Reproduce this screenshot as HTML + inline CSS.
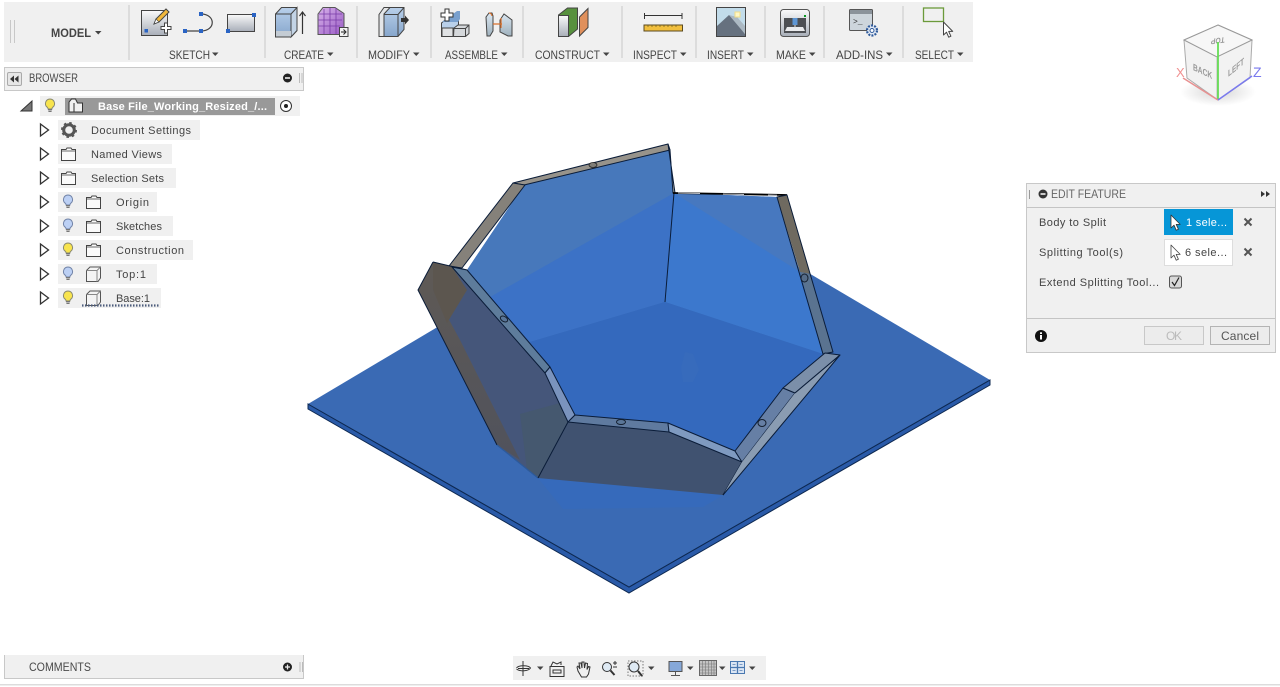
<!DOCTYPE html>
<html><head><meta charset="utf-8"><title>Edit Feature</title>
<style>
html,body{margin:0;padding:0;background:#fff;width:1280px;height:687px;overflow:hidden}
svg{display:block}
text{font-family:"Liberation Sans",sans-serif;font-size:11px;fill:#444}
.t{fill:#4a4a4a}
.e{stroke:#0a1c38;stroke-width:1;stroke-linejoin:round}
</style></head><body>
<svg width="1280" height="687" viewBox="0 0 1280 687" xmlns="http://www.w3.org/2000/svg">
<defs>
<linearGradient id="gw" x1="0" y1="0" x2="0" y2="1"><stop offset="0" stop-color="#fafafa"/><stop offset="1" stop-color="#a8aeb8"/></linearGradient>
<linearGradient id="gb" x1="0" y1="0" x2="0" y2="1"><stop offset="0" stop-color="#b9d0ea"/><stop offset="1" stop-color="#86a6cc"/></linearGradient>
<linearGradient id="gp" x1="0" y1="0" x2="1" y2="1"><stop offset="0" stop-color="#d7b2ea"/><stop offset="1" stop-color="#9a5cc4"/></linearGradient>
<linearGradient id="gs" x1="0" y1="0" x2="0" y2="1"><stop offset="0" stop-color="#dce8f2"/><stop offset="1" stop-color="#9fb1bd"/></linearGradient>
<linearGradient id="lb" x1="0" y1="0" x2="0" y2="1"><stop offset="0" stop-color="#5f5a55"/><stop offset="1" stop-color="#50525c"/></linearGradient>
<radialGradient id="sh" cx=".5" cy=".5" r=".5"><stop offset="0" stop-color="#000" stop-opacity=".16"/><stop offset="1" stop-color="#000" stop-opacity="0"/></radialGradient>
<g id="by"><path d="M0-6a4.600 4.600 0 0 1 2.800 8.200c-.7.6-.9 1.200-.9 1.800h-3.800c0-.6-.2-1.200-.9-1.800A4.600 4.600 0 0 1 0-6z" fill="#f8e44e" stroke="#8a8a70"/><path d="M-2 4.600h4M-1.600 6.400h3.200" stroke="#777" stroke-width="1.300"/></g>
<g id="bb"><path d="M0-6a4.600 4.600 0 0 1 2.800 8.200c-.7.6-.9 1.200-.9 1.800h-3.800c0-.6-.2-1.200-.9-1.800A4.600 4.600 0 0 1 0-6z" fill="#bcd0f4" stroke="#7284a8"/><path d="M-2 4.600h4M-1.600 6.400h3.200" stroke="#777" stroke-width="1.300"/></g>
<g id="fo"><path d="M.5 2.500h4.500l1-1.500h4l1 1.500h3.500v11H.5z" fill="#fafafa" stroke="#444"/><path d="M.5 4h14.500" stroke="#444" stroke-width=".8"/></g>
<g id="cu"><path d="M.5 4.500L4 1h10.500v11L12 15.500H.5z" fill="#f4f4f4" stroke="#555"/><path d="M.5 4.500H11V15.500M11 4.500L14.500 1" fill="none" stroke="#888"/></g>
<path id="ex" d="M40.500 0l8 6-8 6z" fill="#fff" stroke="#333" stroke-width="1.300"/>
<path id="ca" d="M0 0h6.500l-3.250 3.500z" fill="#444"/>
<path id="cur" d="M0 0v13l3-2.800 2.200 5 2.200-1-2.200-4.800h4z" stroke-linejoin="round"/>
</defs>

<!-- toolbar -->
<rect x="4" y="2" width="969" height="60" fill="#f0f0f0"/>
<path d="M10.500 20v23M14.500 20v23" stroke="#c8c8c8"/>
<g stroke="#dcdcdc" stroke-width="2"><path d="M129 5v55M265 6v52M357 6v52M431 6v52M523 6v52M622 6v52M696 6v52M765 6v52M824 6v52M903 6v52"/></g>
<text x="51" y="37" textLength="40" lengthAdjust="spacingAndGlyphs" style="font-size:11.500px;font-weight:bold">MODEL</text>
<use href="#ca" x="95" y="31"/>
<g class="t">
<text x="169" y="59" textLength="41" lengthAdjust="spacingAndGlyphs" style="font-size:12px">SKETCH</text><use href="#ca" x="212" y="52.500"/>
<text x="284" y="59" textLength="40" lengthAdjust="spacingAndGlyphs" style="font-size:12px">CREATE</text><use href="#ca" x="327" y="52.500"/>
<text x="368" y="59" textLength="42" lengthAdjust="spacingAndGlyphs" style="font-size:12px">MODIFY</text><use href="#ca" x="413" y="52.500"/>
<text x="445" y="59" textLength="53" lengthAdjust="spacingAndGlyphs" style="font-size:12px">ASSEMBLE</text><use href="#ca" x="501" y="52.500"/>
<text x="535" y="59" textLength="65" lengthAdjust="spacingAndGlyphs" style="font-size:12px">CONSTRUCT</text><use href="#ca" x="603" y="52.500"/>
<text x="633" y="59" textLength="44" lengthAdjust="spacingAndGlyphs" style="font-size:12px">INSPECT</text><use href="#ca" x="680" y="52.500"/>
<text x="707" y="59" textLength="37" lengthAdjust="spacingAndGlyphs" style="font-size:12px">INSERT</text><use href="#ca" x="747" y="52.500"/>
<text x="776" y="59" textLength="30" lengthAdjust="spacingAndGlyphs" style="font-size:12px">MAKE</text><use href="#ca" x="809" y="52.500"/>
<text x="836" y="59" textLength="47" lengthAdjust="spacingAndGlyphs" style="font-size:12px">ADD-INS</text><use href="#ca" x="886" y="52.500"/>
<text x="915" y="59" textLength="39" lengthAdjust="spacingAndGlyphs" style="font-size:12px">SELECT</text><use href="#ca" x="957" y="52.500"/>
</g>

<!-- sketch icons -->
<rect x="141.500" y="10.500" width="26" height="25" fill="url(#gw)" stroke="#444"/>
<path d="M154 24l2-5 10-10 3 3-10 10z" fill="#f1b83c" stroke="#444"/><path d="M154 24l2-5 3 3z" fill="#fff" stroke="#444" stroke-width=".7"/>
<rect x="144.500" y="29" width="3.500" height="3.500" fill="#2a64c4"/>
<path d="M161 26.500h3.500V23h3v3.500h3.500v3h-3.500V33h-3v-3.500H161z" fill="#fff" stroke="#444"/>
<path d="M185 31h16M201 14c15 0 15 17 0 17" fill="none" stroke="#444" stroke-width="1.200"/>
<g fill="#2a64c4"><rect x="183" y="29" width="4" height="4"/><rect x="199" y="12" width="4" height="4"/><rect x="199" y="29" width="4" height="4"/></g>
<rect x="227.500" y="14.500" width="27" height="17" fill="url(#gw)" stroke="#444"/>
<rect x="252" y="13" width="4" height="4" fill="#2a64c4"/><rect x="226" y="29" width="4" height="4" fill="#2a64c4"/>

<!-- create icons -->
<path d="M275.500 14l6-6.500h15.500v23l-6 6.500h-15.500z" fill="url(#gb)" stroke="#444"/>
<path d="M291 14l6-6.500v23l-6 6.500z" fill="#c3d4e6" stroke="#444"/><path d="M275.500 14H291" stroke="#444"/><rect x="276" y="31" width="15" height="5.500" fill="#c4ccd4"/>
<path d="M302.500 34V13M299.500 16l3-4 3 4" fill="none" stroke="#333" stroke-width="1.200"/>
<path d="M318 14l5-6.500h12l9 6v16l-5 5h-21z" fill="url(#gp)" stroke="#555"/>
<path d="M318 20h24M318 26h22M324 9v25M330 8v26M336 8v26M319 14h23" fill="none" stroke="#7a3ca8" stroke-width=".8"/>
<rect x="339.500" y="27.500" width="8.500" height="9" fill="#f2f2f2" stroke="#444"/><path d="M341 32h4M343.500 29.500l2.500 2.500-2.500 2.500" fill="none" stroke="#222"/>

<!-- modify -->
<path d="M379 14.500l5-7h6v29h-11z" fill="#e4e6e8" stroke="#444"/>
<path d="M384 36.500V14l6-6.500h14v22l-6 7z" fill="url(#gb)" stroke="#444"/><path d="M384 14.500h14v22M398 14.500l6-7" fill="none" stroke="#444"/>
<path d="M401 18h4v-2.500l4 4.500-4 4.500V22h-4z" fill="#333"/>

<!-- assemble -->
<path d="M441.500 23l3-2.500h14V36.500h-17z" fill="#b9d0ea" stroke="#444"/>
<path d="M442 22h16l2-3v-8h-3" fill="#79a0ce" stroke="none"/>
<rect x="442" y="28" width="11" height="8.500" fill="#e0e2e4" stroke="#444"/>
<path d="M454 28l4-3h11v8.500l-3.500 3h-12z" fill="#d5d8db" stroke="#444"/><path d="M454 28.500h11.500v8M465.500 28.500l3.500-3.500" fill="none" stroke="#444"/>
<path d="M445 9h4v4h4v4h-4v4h-4v-4h-4v-4h4z" fill="#fff" stroke="#333"/>
<path d="M486 17l3-4h3l1 3v15l-3 5h-3zM500 20l4-6 8 6v16l-4 0-8-4z" fill="url(#gs)" stroke="#444"/><path d="M489 13a3 3 0 0 1 3 3M493 24h9M501 18v10" fill="none" stroke="#d8702c" stroke-width="1.200"/>

<!-- construct -->
<path d="M558.500 15l9-7h10v21l-9 7.500h-10z" fill="#57913e" stroke="#444"/><path d="M558.500 15.500h10v21h-10z" fill="url(#gw)" stroke="#444"/>
<path d="M579.500 17l8.500-8.500v19L579.500 36z" fill="#e0905c" stroke="#444"/>

<!-- inspect -->
<path d="M644 15.500h38M644.500 13v6M682 13v6" stroke="#333" fill="none"/>
<rect x="644" y="25" width="38.500" height="6" fill="#f1bf3e" stroke="#5a4a20"/><path d="M648 25v2M652 25v2M656 25v2M660 25v2M664 25v2M668 25v2M672 25v2M676 25v2" stroke="#6a5a20" stroke-width=".7"/>

<!-- insert -->
<rect x="716.500" y="7.500" width="29" height="29" fill="#c2dcea" stroke="#444"/>
<path d="M717 36V26l12-11 7 7 9 12v2z" fill="#66717f"/><path d="M729 15l8 2 8 9v8z" fill="#acb9c3"/>
<rect x="735" y="12" width="5" height="5" fill="#fff7c4" stroke="#f1dd88"/>

<!-- make -->
<rect x="780.500" y="9.500" width="29" height="27" rx="3" fill="url(#gw)" stroke="#555"/>
<rect x="784" y="18" width="22" height="15" fill="#4d4f53"/><path d="M787 27h16l2 4h-20z" fill="#e9eaec"/><rect x="792.500" y="18" width="5" height="7" fill="#5d95d3"/><path d="M795 25v3" stroke="#ddd"/><rect x="804" y="15" width="2" height="2" fill="#0a9a22"/>

<!-- add-ins -->
<rect x="849.500" y="9.500" width="23" height="21" rx="1" fill="#cdd5dc" stroke="#555"/><rect x="850" y="10" width="22" height="4" fill="#8b939b"/>
<text x="853" y="24" style="font-size:8px;fill:#333;font-family:'Liberation Mono',monospace">&gt;_</text>
<circle cx="872" cy="30.500" r="5" fill="#e3eaf4" stroke="#2e5a9c" stroke-width="2.200" stroke-dasharray="2 1.200"/><circle cx="872" cy="30.500" r="2" fill="#fff" stroke="#2e5a9c"/>

<!-- select -->
<rect x="923.500" y="8" width="20" height="13.500" fill="none" stroke="#6b9a3a" stroke-width="1.300"/>
<use href="#cur" x="943.500" y="22" fill="#fff" stroke="#444"/>

<!-- browser -->
<rect x="4.500" y="67.500" width="299" height="23" fill="#f0f0f0" stroke="#c8c8c8"/>
<rect x="7.500" y="72.500" width="14" height="13" rx="1.500" fill="#e6e6e6" stroke="#aaa"/>
<path d="M14 75.500v7l-4-3.500zM18.500 75.500v7l-4-3.500z" fill="#333"/>
<text x="29" y="82" textLength="49" lengthAdjust="spacingAndGlyphs" class="t" style="font-size:11.500px">BROWSER</text>
<circle cx="287.500" cy="78" r="4.500" fill="#222"/><rect x="285" y="77.200" width="5" height="1.600" fill="#eee"/>
<path d="M299.500 73v10M302 73v10" stroke="#bbb"/>

<rect x="40" y="96" width="260" height="20" fill="#f0f0f0"/>
<rect x="65" y="98" width="210" height="17" fill="#999"/>
<path d="M21 111l11-10v10z" fill="#777" stroke="#333"/>
<use href="#by" x="50" y="105"/>
<path d="M69 112v-10l2.500-3h4l2 4h5v9z" fill="#f2f2f2" stroke="#333"/><path d="M74 112v-9" stroke="#333"/>
<text x="98" y="110" textLength="169" style="font-weight:bold;fill:#fff">Base File_Working_Resized_/...</text>
<circle cx="286" cy="106" r="5.500" fill="#fff" stroke="#333"/><circle cx="286" cy="106" r="2" fill="#222"/>

<g fill="#f0f0f0">
<rect x="58" y="120" width="142" height="20"/><rect x="58" y="144" width="114" height="20"/><rect x="58" y="168" width="118" height="20"/><rect x="58" y="192" width="99" height="20"/><rect x="58" y="216" width="115" height="20"/><rect x="58" y="240" width="135" height="20"/><rect x="58" y="264" width="99" height="20"/><rect x="58" y="288" width="103" height="20"/>
</g>
<use href="#ex" y="124"/><use href="#ex" y="148"/><use href="#ex" y="172"/><use href="#ex" y="196"/><use href="#ex" y="220"/><use href="#ex" y="244"/><use href="#ex" y="268"/><use href="#ex" y="292"/>
<circle cx="69" cy="130" r="5.300" fill="none" stroke="#555" stroke-width="3"/><circle cx="69" cy="130" r="7" fill="none" stroke="#555" stroke-width="2" stroke-dasharray="2.500 3"/>
<use href="#fo" x="61" y="147"/><use href="#fo" x="61" y="171"/>
<use href="#bb" x="68" y="201"/><use href="#bb" x="68" y="225"/><use href="#by" x="68" y="249"/><use href="#bb" x="68" y="273"/><use href="#by" x="68" y="297"/>
<use href="#fo" x="86" y="195"/><use href="#fo" x="86" y="219"/><use href="#fo" x="86" y="243"/>
<use href="#cu" x="86" y="266"/><use href="#cu" x="86" y="290"/>
<g>
<text x="91" y="134" textLength="100">Document Settings</text>
<text x="91" y="158" textLength="71">Named Views</text>
<text x="91" y="182" textLength="73">Selection Sets</text>
<text x="116" y="206" textLength="33">Origin</text>
<text x="116" y="230" textLength="46">Sketches</text>
<text x="116" y="254" textLength="68">Construction</text>
<text x="116" y="278" textLength="30">Top:1</text>
<text x="116" y="302" textLength="34">Base:1</text>
</g>
<path d="M82 305.500H159" fill="none" stroke="#4c5c7c" stroke-width="2.200" stroke-dasharray="1.500 1.500"/>

<!-- plate -->
<path d="M308 404v5l321 184 361-208v-5L629 587z" fill="#2a5aa8" stroke="#0d2850"/>
<path d="M308 404L668 190l322 190L629 587z" fill="#3a6ab4"/>
<path d="M308 404L629 587 990 380" fill="none" stroke="#0d2850" stroke-width="1"/>
<path d="M538 478l185 17-20 12-140 2z" fill="#366abb"/>

<!-- inner back faces -->
<path d="M524 185L670 150 674 193 665 302 530 342 467 270z" fill="#3c72c6"/>
<path d="M524 185L670 150 674 193 490 297 462 313 467 270z" fill="#4778bb"/>
<path d="M674 193L777 197 823 354 665 302z" fill="#3c78cd"/>
<path d="M674 193L777 197 800 272z" fill="#4778bf"/>
<path d="M665 302L530 342 550 367 575 415 668 423 735 450 783 388 823 354z" fill="#3469bd"/>
<path d="M685 352l8 2 6 16-6 12-10 0-2-14z" fill="#3a6dbb" opacity=".6"/>
<path d="M674 193L665 302" class="e" fill="none"/>

<!-- back rims -->
<path d="M513 183L668 144 670 150 524 185z" fill="#97938b" class="e"/>
<path d="M668 144l7 49h-2l-3-43z" fill="#a7a69e" class="e"/>
<path d="M673 193l114 2" stroke="#000" stroke-width="1.800" fill="none"/>
<path d="M678 193l22 .5M723 194l21 .5M768 195l9 .2" stroke="#b8bcc4" stroke-width="1"/>
<path d="M449 266L513 183 525 185 462 268z" fill="#85817a" class="e"/>
<path d="M777 197L787 195 810 274 800 272z" fill="#6f6a60"/>
<path d="M800 272L810 274 833 352 823 354z" fill="#5a7390"/>
<path d="M777 197L823 354 833 352 787 195z" fill="none" class="e"/>
<ellipse cx="593" cy="165" rx="4" ry="2.500" fill="#807e78" stroke="#222" stroke-width=".8"/>
<ellipse cx="804.500" cy="278" rx="3.500" ry="4" fill="#566c88" stroke="#152030"/>

<!-- left panel -->
<path d="M433 262L418 290 497 445 538 478 568 422 545 373 452 267z" fill="#45567a"/>
<path d="M433 262L418 290 497 445 520 460 460 340 433 290 452 267z" fill="url(#lb)"/>
<path d="M433 262L452 267 467 290 447 323 433 290z" fill="#5c564f"/>
<path d="M520 414L560 403 568 422 538 478 527 470z" fill="#45586f"/>
<path d="M433 262L418 290 497 445M433 262L467 270" fill="none" class="e" stroke-width="1.300"/>
<path d="M497 445L538 478" stroke="#2c5a9c" stroke-width="1.200"/>
<path d="M452 267L467 270 550 367 545 373z" fill="#5e7c9b" class="e"/>
<path d="M545 373L550 367 575 415 568 422z" fill="#7a93bd" class="e"/>
<ellipse cx="504" cy="319" rx="4" ry="2.500" transform="rotate(30 504 319)" fill="#5a7698" stroke="#152030"/>

<!-- front -->
<path d="M568 422L669 432 742 462 723 495 538 478z" fill="#405270"/>
<path d="M568 422L538 478M723 495L742 462" class="e"/>
<path d="M575 415L668 423 669 432 568 422z" fill="#5f7a9f" class="e"/>
<path d="M668 423L735 451 742 462 669 432z" fill="#7f9ac0" class="e"/>
<path d="M735 451L783 388 795 393 742 462z" fill="#667fa5" class="e"/>
<path d="M783 388L825 353 840 355 795 393z" fill="#7b8fa9" class="e"/>
<path d="M840 355L723 495 742 462 795 393z" fill="#8a9cb2"/>
<path d="M840 355L795 393M840 355L723 495" class="e" fill="none"/>
<ellipse cx="621" cy="422" rx="4.500" ry="2.500" fill="#5a7698" stroke="#152030"/>
<ellipse cx="762" cy="423" rx="4" ry="3.500" fill="#667fa5" stroke="#152030"/>

<!-- view cube -->
<ellipse cx="1218" cy="92" rx="38" ry="14" fill="url(#sh)"/>
<path d="M1218 25l34 15-2 38-32 22-31-22-3-38z" fill="#f2f2f2" stroke="#aaa"/>
<path d="M1218 25l34 15-35 17-33-17z" fill="#f7f7f7" stroke="#999"/>
<path d="M1217 57v43" stroke="#bbb"/>
<text transform="matrix(.7 .33 0 1 1193 70)" style="font-size:9.500px;fill:#999;font-weight:bold">BACK</text>
<text transform="matrix(.68 -.55 0 1 1228 77)" style="font-size:9.500px;fill:#999;font-weight:bold">LEFT</text>
<text transform="matrix(-.75 .1 .1 -.9 1225 37)" style="font-size:9px;fill:#999;font-weight:bold">TOP</text>
<path d="M1218 100V42" stroke="#66dd55" stroke-width="1.800"/>
<path d="M1218 100L1183 78" stroke="#e89090" stroke-width="1.500"/>
<path d="M1218 100L1252 76" stroke="#7a7aee" stroke-width="1.500"/>
<text x="1176" y="77" style="font-size:13px;fill:#f09090">X</text>
<text x="1253" y="77" style="font-size:14px;fill:#7a7aee">Z</text>

<!-- edit feature -->
<rect x="1026.500" y="183.500" width="249" height="169" fill="#f0f0f0" stroke="#c8c8c8"/>
<path d="M1027 207.500h248M1027 318.500h248" stroke="#c4c4c4"/>
<path d="M1029.500 190v9" stroke="#999"/>
<circle cx="1043" cy="194" r="4.500" fill="#333"/><rect x="1040.500" y="193.200" width="5" height="1.600" fill="#eee"/>
<text x="1051" y="198" textLength="75" lengthAdjust="spacingAndGlyphs" style="fill:#666;font-size:11.500px">EDIT FEATURE</text>
<path d="M1261 191v6l4-3zM1266 191v6l4-3z" fill="#333"/>
<text x="1039" y="226" textLength="67">Body to Split</text>
<text x="1039" y="256" textLength="84">Splitting Tool(s)</text>
<text x="1039" y="286" textLength="120">Extend Splitting Tool...</text>
<rect x="1164" y="209" width="69" height="26" fill="#0696d7"/>
<use href="#cur" x="1171" y="215" fill="#fff" stroke="#333" stroke-width=".8"/>
<text x="1186" y="226" textLength="41" style="fill:#fff">1 sele...</text>
<rect x="1164.500" y="239.500" width="68" height="26" fill="#fff" stroke="#ddd"/>
<use href="#cur" x="1171" y="245" fill="#fff" stroke="#444" stroke-width=".8"/>
<text x="1185" y="256" textLength="42">6 sele...</text>
<path d="M1244.500 218.500l7 7M1251.500 218.500l-7 7M1244.500 248.500l7 7M1251.500 248.500l-7 7" stroke="#555" stroke-width="2"/>
<rect x="1169.500" y="276" width="12" height="12" rx="2" fill="#d8d8d8" stroke="#555"/>
<path d="M1172 282l2.500 3.500 4.500-8" fill="none" stroke="#222" stroke-width="1.200"/>
<circle cx="1041" cy="336" r="6" fill="#111"/><rect x="1040" y="335" width="2" height="4.500" fill="#fff"/><rect x="1040" y="332.300" width="2" height="1.700" fill="#fff"/>
<rect x="1144.500" y="326.500" width="59" height="18" fill="#ececec" stroke="#c8c8c8"/>
<text x="1166" y="340" textLength="16" style="font-size:12px;fill:#bbb">OK</text>
<rect x="1210.500" y="326.500" width="59" height="18" fill="#ececec" stroke="#b4b4b4"/>
<text x="1221" y="340" textLength="38" style="font-size:12px;fill:#555">Cancel</text>

<!-- comments -->
<rect x="4.500" y="655.500" width="299" height="23" fill="#f0f0f0" stroke="#c8c8c8"/>
<rect x="5" y="655" width="298" height="1" fill="#f0f0f0"/>
<text x="29" y="671" textLength="62" lengthAdjust="spacingAndGlyphs" class="t" style="font-size:11.500px">COMMENTS</text>
<circle cx="287.500" cy="667" r="4.500" fill="#222"/><path d="M285 667h5M287.500 664.500v5" stroke="#eee" stroke-width="1.300"/>
<path d="M300 662v10M302.500 662v10" stroke="#bbb"/>
<rect x="0" y="684" width="1280" height="1.500" fill="#dcdcdc"/>

<!-- nav bar -->
<rect x="513" y="656" width="253" height="24" fill="#f0f0f0"/>
<g fill="none" stroke="#333">
<path d="M523 661v15M518 668.500h11M516.500 668c2-3 12-3 14 0-2 3-10 4-14 1"/>
<path d="M550 666.500h14v10h-14zM553 670h8v3h-8zM551 666l2-4 4 2 4-2v3"/>
<path d="M578 671l-1-4 1-1 2 3-1-6 2 0 1 5 0-6 2 0 .5 6 1-5 2 .5-.5 6 1.500-3 1.500 .5-1.500 7-2 3h-5z"/>
<circle cx="607" cy="667" r="4.500" fill="#dfeaf4"/><path d="M610.500 670.500l4 4.500" stroke-width="2"/><path d="M613 663h4M615 661v4M613 667h4"/>
<rect x="628" y="661" width="15" height="15" stroke-dasharray="1.500 1.500" stroke="#777"/><circle cx="634" cy="667" r="5" fill="#dfeaf4"/><path d="M638 671l4 5" stroke-width="2"/>
<rect x="669" y="661.500" width="13" height="10" fill="#86a8d8" stroke="#555"/><path d="M675.500 672v3M671 675.500h9" stroke="#555"/>
</g>
<rect x="699.500" y="660.500" width="17" height="15" fill="#c4c4c4" stroke="#666"/>
<path d="M702.500 661v14M705.500 661v14M708.500 661v14M711.500 661v14M714 661v14M700 664h16M700 667h16M700 670h16M700 673h16" stroke="#777" stroke-width=".6"/>
<rect x="730.500" y="661.500" width="14" height="12" fill="#dbe6f4" stroke="#4a78b0"/><path d="M737.500 661v13M730 667.500h15" stroke="#4a78b0" stroke-width="1.300"/><path d="M732.500 664.500h3M739.500 664.500h3M732.500 670.500h3M739.500 670.500h3" stroke="#7a9ac4"/>
<use href="#ca" x="537" y="666.500"/><use href="#ca" x="648" y="666.500"/><use href="#ca" x="687" y="666.500"/><use href="#ca" x="719" y="666.500"/><use href="#ca" x="749" y="666.500"/>
</svg>
</body></html>
